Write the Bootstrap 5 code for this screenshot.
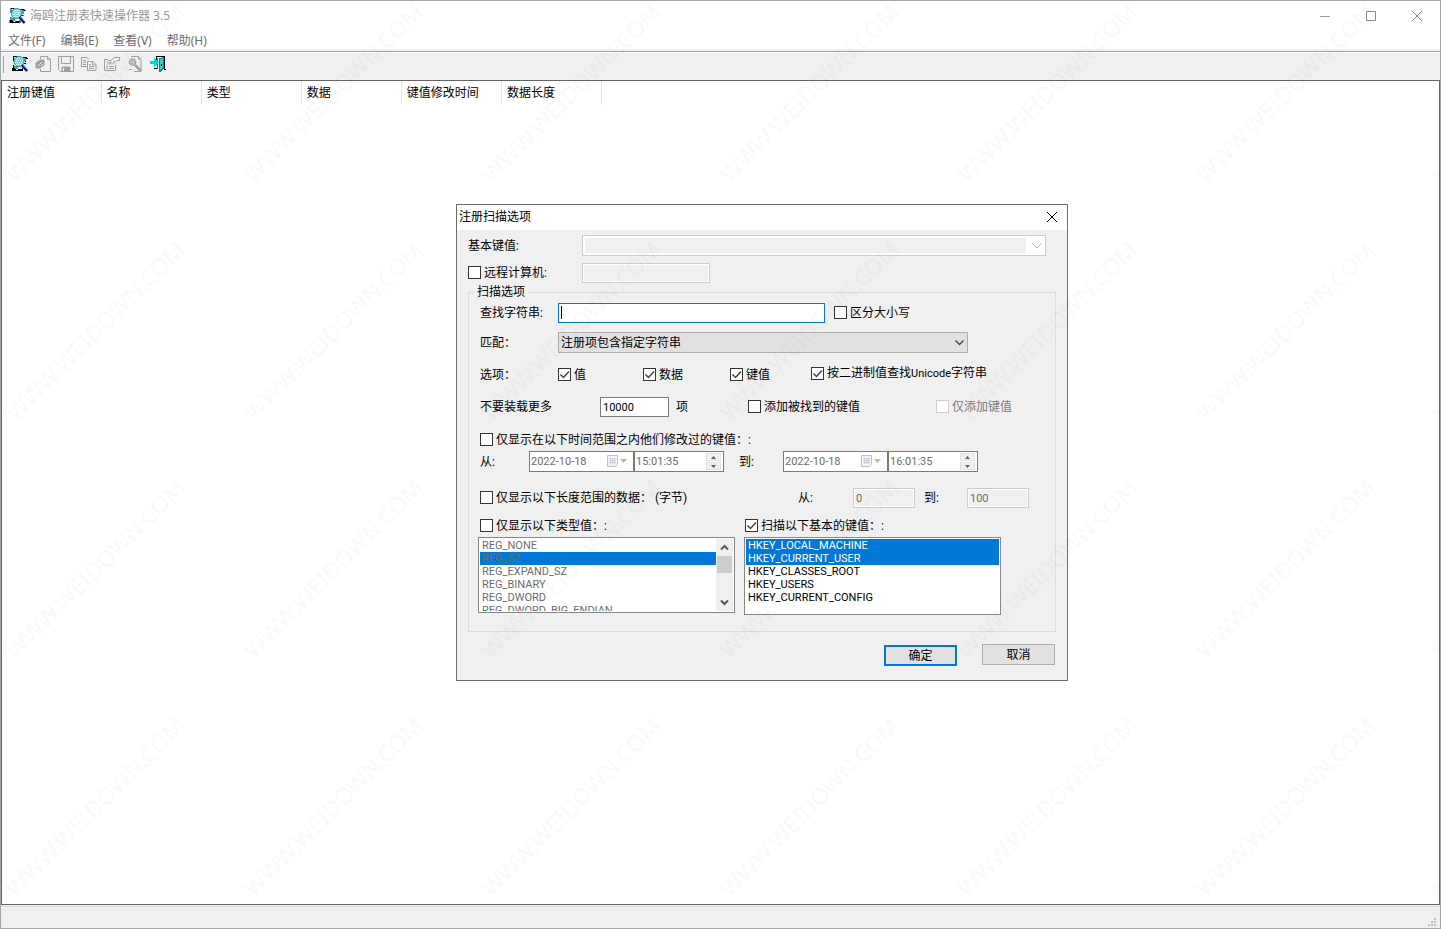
<!DOCTYPE html>
<html lang="zh-CN">
<head>
<meta charset="utf-8">
<meta name="viewport" content="width=device-width, initial-scale=1">
<title>海鸥注册表快速操作器 3.5</title>
<link href="https://cdn.jsdelivr.net/npm/bootstrap@5.3.0/dist/css/bootstrap.min.css" rel="stylesheet">
<style>
  body { font: 12px/16px "Noto Sans", "Noto Sans CJK SC", sans-serif; color: #000; background: #fff; }
  .app { border: 1px solid #a6a6a6; background: #f0f0f0; }
  .app-title { height: 29px; padding-left: 8px; color: #999; }
  .win-btn { width: 46px; height: 28px; }
  .menu-bar { height: 20px; padding-top: 2px; border-bottom: 1px solid #f0f0f0; gap: 1px; }
  .menu-bar a { padding: 0 7px; color: #6d6d6d; text-decoration: none; }
  .tool-bar { height: 29px; border-top: 1px solid #a0a0a0; box-shadow: inset 0 1px #fff; margin-top: 1px; padding: 0 0 4px 2px; }
  .grip { width: 1px; height: 17px; background: #a0a0a0; margin-right: 4px; }
  .tool { width: 23px; height: 22px; }
  .list-view { border: 1px solid #646464; background: #fff; }
  .list-view th { width: 100px; height: 24px; padding: 0 1px 0 5px; border-right: 1px solid #e5e5e5; font-weight: 400; }
  .list-view th:first-child { width: 99px; }
  .list-view table { table-layout: fixed; width: 600px; }
  .status { height: 22px; border-top: 1px solid #d7d7d7; margin-top: 1px; }

  .dialog { position: absolute; left: 456px; top: 204px; width: 612px; border: 1px solid #6e6e6e; background: #f0f0f0;
            font-family: Roboto, "Noto Sans CJK SC", sans-serif; }
  .dialog-title { height: 25px; padding: 0 2px 2px; }
  .dialog-body { padding: 5px 11px 14px; }
  .line { display: grid; align-items: center; }
  .top-line { grid-template-columns: 114px auto; justify-content: start; }
  .second { margin-top: 7px; }
  .ctl { height: 20px; padding: 0 2px; border: 1px solid #7a7a7a; border-radius: 0; background-color: #fff;
         font-size: 11px; line-height: 16px; color: #000; outline: 0; min-width: 0; }
  .ctl:disabled { border-color: #ccc; color: #6d6d6d; background-color: #f0f0f0; box-shadow: inset 0 0 0 1px #fff; opacity: 1; }
  .combo { height: 21px; appearance: none; font-size: 12px; border-color: #adadad;
           background: #e1e1e1 url("data:image/svg+xml,%3Csvg xmlns='http://www.w3.org/2000/svg' width='9' height='6'%3E%3Cpath d='M.5.5l4 4 4-4' fill='none' stroke='%23444' stroke-width='1.300'/%3E%3C/svg%3E") no-repeat right 3px center; }
  .combo-base { width: 464px; }
  .combo-base:disabled { box-shadow: inset 0 0 0 2px #fff, inset -19px 0 #fff;
           background: #f0f0f0; }
  .combo-base + svg { position: absolute; right: 4px; top: 8px; }
  .w-128 { width: 128px; } .w-267 { width: 267px; } .w-410 { width: 410px; } .w-69 { width: 69px; } .w-62 { width: 62px; }
  .caret-box { border-color: #0078d7; background: #fff linear-gradient(#000, #000) no-repeat 2px 2px / 1px 13px; }
  .group { border: 1px solid #dcdcdc; margin-top: 1px; padding: 0 9px 16px; }
  .group legend { float: none; width: auto; font-size: 12px; line-height: 16px; margin: 0 0 3px -4px; padding: 0 3px; }
  .group .line { padding-left: 2px; }
  .tick { display: flex; align-items: center; gap: 3px; white-space: nowrap; }
  .tick .form-check-input { width: 13px; height: 13px; margin: 0 0 1px; border: 1px solid #333; border-radius: 0; background-color: #fff; flex: none; }
  .tick .form-check-input:checked { background: #fff url("data:image/svg+xml,%3Csvg xmlns='http://www.w3.org/2000/svg' width='11' height='11'%3E%3Cpath d='M1.500 5.500l3 3 5.500-6' fill='none' stroke='%23444' stroke-width='1.500'/%3E%3C/svg%3E") center / 11px 11px no-repeat; }
  .tick .form-check-input:disabled { border-color: #ccc; opacity: 1; }
  .tick .form-check-input:disabled ~ label { opacity: 1; color: #7a7a7a; }
  .latin { font-size: 11px; }
  .row-find { grid-template-columns: 78px 276px auto; height: 20px; }
  .row-match { grid-template-columns: 78px auto; justify-content: start; margin-top: 9px; }
  .row-opts { grid-template-columns: 78px 85px 87px 81px auto; height: 20px; margin-top: 12px; }
  .row-limit { grid-template-columns: 120px 76px 72px 188px auto; margin-top: 12px; }
  .row-time { height: 16px; margin-top: 15px; }
  .row-range { grid-template-columns: 49px 105px 105px 44px 105px 90px; margin-top: 3px; }
  .row-size { grid-template-columns: 318px 55px 71px 43px 62px; margin-top: 16px; }
  .row-heads { grid-template-columns: 265px auto; height: 16px; margin-top: 10px; }
  .lists { gap: 9px; margin-top: 3px; }
  .picker { height: 21px; border: 1px solid #7a7a7a; background: #fff; }
  .picker-time { width: 90px; }
  .picker input { border: 0; padding: 0 0 0 1px; background: transparent; font-size: 11px; color: #6d6d6d; min-width: 0; width: 100%; }
  .picker svg { margin-right: 1px; }
  .picker > svg { margin-right: 5px; }
  .spin { margin-right: 2px; gap: 1px; }
  .spin button { width: 15px; height: 8px; padding: 0; border: 1px solid #e0e0e0; background: #f0f0f0; display: flex; align-items: center; justify-content: center; }
  .list-box { width: 257px; border: 1px solid #828790; background: #fff; padding: 1px; }
  .list-box select { appearance: none; border: 0; padding: 0; background: #fff; overflow: hidden; outline: 0; font-size: 11px; border-radius: 0; }
  .list-box option { height: 13px; min-height: 13px; padding: 0 2px; line-height: 13px; color: #000; }
  .list-box option:checked { background: #0078d7 linear-gradient(#0078d7, #0078d7); color: #fff; -webkit-text-fill-color: #fff; }
  .list-box select:disabled option { color: #6d6d6d; -webkit-text-fill-color: #6d6d6d; }
  .types { height: 76px; } .types select { height: 72px; }
  .roots { height: 78px; } .roots select { height: 74px; }
  .scroller { width: 17px; background: #f0f0f0; }
  .scroller i { height: 17px; width: 15px; background: #cdcdcd; }
  .actions { gap: 25px; padding: 12px 1px 0 0; }
  .push { width: 73px; height: 21px; padding: 0; border: 1px solid #adadad; border-radius: 0; background: #e1e1e1; font-size: 12px; line-height: 16px; }
  .push-main { border: 2px solid #0078d7; margin-top: 1px; }
  .watermark { position: absolute; inset: 0; width: 100%; height: 100%; pointer-events: none; }
</style>
</head>
<body>
<svg class="d-none">
  <symbol id="scan" viewBox="0 0 16 16">
    <path fill="#000" d="M1 0h4v1H2v4H1zM1 9h1v3h2v2h2v1H0v-3h1zM11 1h4v1h-4zM13 2h3v1h-2v3h-1zM6 13h4v2H6z"/>
    <path fill="#5a9a9a" d="M2 10h4v3H3v-1H2zM12 2h2v3h-2z"/>
    <circle cx="7" cy="5.500" r="5" fill="#5fe6ea" stroke="#1c8c98"/>
    <path fill="#fff" d="M5 2h1v1H5zM7 2h1v1H7zM9 2h1v1H9zM4 4h1v1H4zM6 4h1v1H6zM8 4h1v1H8zM10 4h1v1h-1zM3 6h1v1H3zM5 6h1v1H5zM7 6h1v1H7zM9 6h1v1H9zM4 8h1v1H4zM6 8h1v1H6zM8 8h1v1H8z"/>
    <path stroke="#000090" stroke-width="2.500" d="M10 9l5 6"/><path stroke="#3aa0ff" d="M11 9l4 4.500"/>
    <path fill="#000" d="M12 7h2v1h-2zM10 12h1v3h-1z"/>
  </symbol>
</svg>
<div class="app position-relative vh-100 d-flex flex-column overflow-hidden">
  <header class="bg-white">
    <div class="app-title d-flex align-items-center">
      <svg width="17" height="16"><use href="#scan"/></svg>
      <span class="ps-1 flex-grow-1">海鸥注册表快速操作器 3.5</span>
      <button class="win-btn btn p-0 border-0 d-flex align-items-center justify-content-center" aria-label="最小化"><svg width="10" height="10"><path d="M0 5.500h10" stroke="#999"/></svg></button>
      <button class="win-btn btn p-0 border-0 d-flex align-items-center justify-content-center" aria-label="最大化"><svg width="10" height="10"><path d="M.5.5h9v9h-9z" fill="none" stroke="#888"/></svg></button>
      <button class="win-btn btn p-0 border-0 d-flex align-items-center justify-content-center" aria-label="关闭"><svg width="10" height="10"><path d="M0 0l10 10M10 0L0 10" stroke="#888"/></svg></button>
    </div>
    <nav class="menu-bar d-flex align-items-center">
      <a href="#">文件(F)</a><a href="#">编辑(E)</a><a href="#">查看(V)</a><a href="#">帮助(H)</a>
    </nav>
  </header>
  <div class="tool-bar d-flex align-items-center" role="toolbar">
    <span class="grip"></span>
    <button class="tool btn p-0 border-0 d-flex align-items-center justify-content-center" aria-label="扫描"><svg width="16" height="16"><use href="#scan"/></svg></button>
    <button class="tool btn p-0 border-0 d-flex align-items-center justify-content-center" aria-label="打开"><svg width="16" height="16" fill="none" stroke="#a0a0a0"><path d="M5.500 3V.5h7l3 3v12h-10V13M12.500.5v3h3"/><path fill="#a0a0a0" d="M1 7l4-3h4v5l-4 3H1z"/><path stroke="#f0f0f0" d="M3 10l4-4M6 10l2-2"/></svg></button>
    <button class="tool btn p-0 border-0 d-flex align-items-center justify-content-center" aria-label="保存"><svg width="16" height="16" fill="none" stroke="#a0a0a0"><path d="M.5.5h15v15H2.500l-2-2z"/><path d="M3.500.5v7h9v-7"/><path d="M4 11h8v4H4z" fill="#a0a0a0"/><path d="M5.500 12v3" stroke="#f0f0f0"/></svg></button>
    <button class="tool btn p-0 border-0 d-flex align-items-center justify-content-center" aria-label="复制"><svg width="16" height="16" fill="none" stroke="#a0a0a0"><path d="M6 10.500H.5v-9H6l2 2M2 4.500h3M2 6.500h3M2 8.500h3"/><path fill="#f0f0f0" d="M6.500 5.500H12l3 3v6H6.500zM11.500 6v3H15M8 8.500h2M8 10.500h5M8 12.500h5"/></svg></button>
    <button class="tool btn p-0 border-0 d-flex align-items-center justify-content-center" aria-label="属性"><svg width="16" height="16" fill="none" stroke="#a0a0a0"><path d="M4 3.500H.5v11h11V9M2 10.500h2M5 10.500h5M2 12.500h2M5 12.500h5"/><path d="M3 6.500L5 4.500h2l3-3h5.500v3H13l-2 2-2-1"/><path d="M3 8.500l4-3M5 8.500l3-2M8 8.500l2-2"/></svg></button>
    <button class="tool btn p-0 border-0 d-flex align-items-center justify-content-center" aria-label="查找"><svg width="16" height="16" fill="none" stroke="#a0a0a0"><path d="M4 .5h7l3 3v12H7M11.500 0v3H14M2 13.500h3"/><circle cx="5.500" cy="6" r="3.500" fill="#b4b4b4" stroke-dasharray="2 1"/><path d="M8 9l6 6" stroke-width="2.500"/><path d="M4 6h1M6 5h1M6 7h1" stroke="#f0f0f0"/></svg></button>
    <button class="tool btn p-0 border-0 d-flex align-items-center justify-content-center" aria-label="退出"><svg width="16" height="16" shape-rendering="crispEdges"><path d="M6.500 4V.5h8v13H16M4 12.500h4" fill="none" stroke="#000"/><path d="M7 2h1v11H7z" fill="#555"/><path fill="#088" d="M9 2l5-1v12l-4 3H9z"/><path fill="#40c8c8" d="M10 3l3-1v10l-3 2z"/><path fill="#00d4d8" d="M0 5h4V2l5 4.500L4 11V8H0z"/><path fill="#000" d="M11 8h1v2h-1z"/></svg></button>
  </div>
  <main class="list-view flex-grow-1">
    <table><thead><tr><th scope="col">注册键值</th><th scope="col">名称</th><th scope="col">类型</th><th scope="col">数据</th><th scope="col">键值修改时间</th><th scope="col">数据长度</th></tr></thead></table>
  </main>
  <footer class="status d-flex align-items-end justify-content-end">
    <svg width="9" height="10" class="me-1" fill="#bfbfbf"><path d="M7 0h2v2H7zM4 3h2v2H4zM7 3h2v2H7zM1 6h2v2H1zM4 6h2v2H4zM7 6h2v2H7z"/></svg>
  </footer>
</div>

<section class="dialog" role="dialog" aria-labelledby="dlgTitle">
  <div class="dialog-title bg-white d-flex align-items-center justify-content-between">
    <span id="dlgTitle">注册扫描选项</span>
    <button class="btn p-0 border-0 d-flex px-2" aria-label="关闭"><svg width="10" height="10"><path d="M0 0l10 10M10 0L0 10" stroke="#000"/></svg></button>
  </div>
  <form class="dialog-body">
    <div class="line top-line">
      <label for="base">基本键值:</label>
      <div class="position-relative d-flex"><select id="base" class="ctl combo combo-base" disabled></select><svg width="10" height="6"><path d="M.5.5l4.500 4.500L9.500.5" fill="none" stroke="#b0b0b0"/></svg></div>
    </div>
    <div class="line top-line second">
      <div class="tick"><input class="form-check-input" type="checkbox" id="remote"><label for="remote">远程计算机:</label></div>
      <input class="ctl w-128" aria-label="远程计算机" disabled>
    </div>
    <fieldset class="group">
      <legend>扫描选项</legend>
      <div class="line row-find">
        <label for="find">查找字符串:</label>
        <input id="find" class="ctl w-267 caret-box">
        <div class="tick"><input class="form-check-input" type="checkbox" id="case"><label for="case">区分大小写</label></div>
      </div>
      <div class="line row-match">
        <label for="match">匹配：</label>
        <select id="match" class="ctl combo w-410"><option>注册项包含指定字符串</option></select>
      </div>
      <div class="line row-opts">
        <span>选项：</span>
        <div class="tick"><input class="form-check-input" type="checkbox" id="oVal" checked><label for="oVal">值</label></div>
        <div class="tick"><input class="form-check-input" type="checkbox" id="oData" checked><label for="oData">数据</label></div>
        <div class="tick"><input class="form-check-input" type="checkbox" id="oKey" checked><label for="oKey">键值</label></div>
        <div class="tick align-self-start"><input class="form-check-input" type="checkbox" id="oBin" checked><label for="oBin">按二进制值查找<span class="latin">Unicode</span>字符串</label></div>
      </div>
      <div class="line row-limit">
        <label for="max">不要装载更多</label>
        <input id="max" class="ctl w-69" value="10000">
        <span>项</span>
        <div class="tick"><input class="form-check-input" type="checkbox" id="addKey"><label for="addKey">添加被找到的键值</label></div>
        <div class="tick"><input class="form-check-input" type="checkbox" id="onlyKey" disabled><label for="onlyKey">仅添加键值</label></div>
      </div>
      <div class="line row-time">
        <div class="tick"><input class="form-check-input" type="checkbox" id="byTime"><label for="byTime">仅显示在以下时间范围之内他们修改过的键值：:</label></div>
      </div>
      <div class="line row-range">
        <label for="d1">从:</label>
        <div class="picker d-flex align-items-center"><input id="d1" value="2022-10-18" disabled><svg class="flex-shrink-0" width="22" height="13"><path d="M1.500.5h10v9l-2 2h-8z" fill="#f4f4f8" stroke="#c4bebe"/><path d="M3 3.500h7M3 5.500h7M3 7.500h7M4.500 3v6M6.500 3v6M8.500 3v6" stroke="#ccd0dc"/><path d="M14 4h7l-3.500 4z" fill="#b8b8b0"/></svg></div>
        <div class="picker picker-time d-flex align-items-center"><input aria-label="开始时间" value="15:01:35" disabled><div class="spin d-flex flex-column flex-shrink-0"><button type="button" aria-label="增加" disabled><svg width="5" height="3"><path d="M0 3h5L2.500 0z" fill="#606060"/></svg></button><button type="button" aria-label="减少" disabled><svg width="5" height="3"><path d="M0 0h5L2.500 3z" fill="#606060"/></svg></button></div></div>
        <label for="d2">到:</label>
        <div class="picker d-flex align-items-center"><input id="d2" value="2022-10-18" disabled><svg class="flex-shrink-0" width="22" height="13"><path d="M1.500.5h10v9l-2 2h-8z" fill="#f4f4f8" stroke="#c4bebe"/><path d="M3 3.500h7M3 5.500h7M3 7.500h7M4.500 3v6M6.500 3v6M8.500 3v6" stroke="#ccd0dc"/><path d="M14 4h7l-3.500 4z" fill="#b8b8b0"/></svg></div>
        <div class="picker picker-time d-flex align-items-center"><input aria-label="结束时间" value="16:01:35" disabled><div class="spin d-flex flex-column flex-shrink-0"><button type="button" aria-label="增加" disabled><svg width="5" height="3"><path d="M0 3h5L2.500 0z" fill="#606060"/></svg></button><button type="button" aria-label="减少" disabled><svg width="5" height="3"><path d="M0 0h5L2.500 3z" fill="#606060"/></svg></button></div></div>
      </div>
      <div class="line row-size">
        <div class="tick"><input class="form-check-input" type="checkbox" id="bySize"><label for="bySize">仅显示以下长度范围的数据： (字节)</label></div>
        <label for="s1">从:</label>
        <input id="s1" class="ctl w-62" value="0" disabled>
        <label for="s2">到:</label>
        <input id="s2" class="ctl w-62" value="100" disabled>
      </div>
      <div class="line row-heads">
        <div class="tick"><input class="form-check-input" type="checkbox" id="byType"><label for="byType">仅显示以下类型值：:</label></div>
        <div class="tick"><input class="form-check-input" type="checkbox" id="byRoot" checked><label for="byRoot">扫描以下基本的键值：:</label></div>
      </div>
      <div class="lists d-flex align-items-start">
        <div class="list-box types d-flex overflow-hidden">
          <select multiple disabled class="flex-grow-1" aria-label="类型值">
            <option>REG_NONE</option><option selected>REG_SZ</option><option>REG_EXPAND_SZ</option><option>REG_BINARY</option><option>REG_DWORD</option><option>REG_DWORD_BIG_ENDIAN</option>
          </select>
          <div class="scroller d-flex flex-column align-items-center" aria-hidden="true">
            <svg width="17" height="17"><path d="M5 10.500L8.500 7l3.500 3.500" fill="none" stroke="#555" stroke-width="2"/></svg>
            <i></i>
            <svg width="17" height="17" class="mt-auto"><path d="M5 6.500L8.500 10 12 6.500" fill="none" stroke="#555" stroke-width="2"/></svg>
          </div>
        </div>
        <div class="list-box roots d-flex">
          <select multiple class="flex-grow-1" aria-label="基本的键值">
            <option selected>HKEY_LOCAL_MACHINE</option><option selected>HKEY_CURRENT_USER</option><option>HKEY_CLASSES_ROOT</option><option>HKEY_USERS</option><option>HKEY_CURRENT_CONFIG</option>
          </select>
        </div>
      </div>
    </fieldset>
    <div class="actions d-flex justify-content-end align-items-start">
      <button type="button" class="push push-main">确定</button>
      <button type="button" class="push">取消</button>
    </div>
  </form>
</section>

<svg class="watermark" aria-hidden="true">
  <defs>
    <pattern id="wm" width="238" height="238" patternUnits="userSpaceOnUse">
      <text transform="translate(16 184) rotate(-45)" font-family="Noto Sans, sans-serif" font-size="23" fill="#000" fill-opacity=".022">WWW.WEIDOWN.COM</text>
    </pattern>
  </defs>
  <rect width="100%" height="100%" fill="url(#wm)"/>
</svg>
<script src="https://cdn.jsdelivr.net/npm/bootstrap@5.3.0/dist/js/bootstrap.bundle.min.js"></script>
</body>
</html>
